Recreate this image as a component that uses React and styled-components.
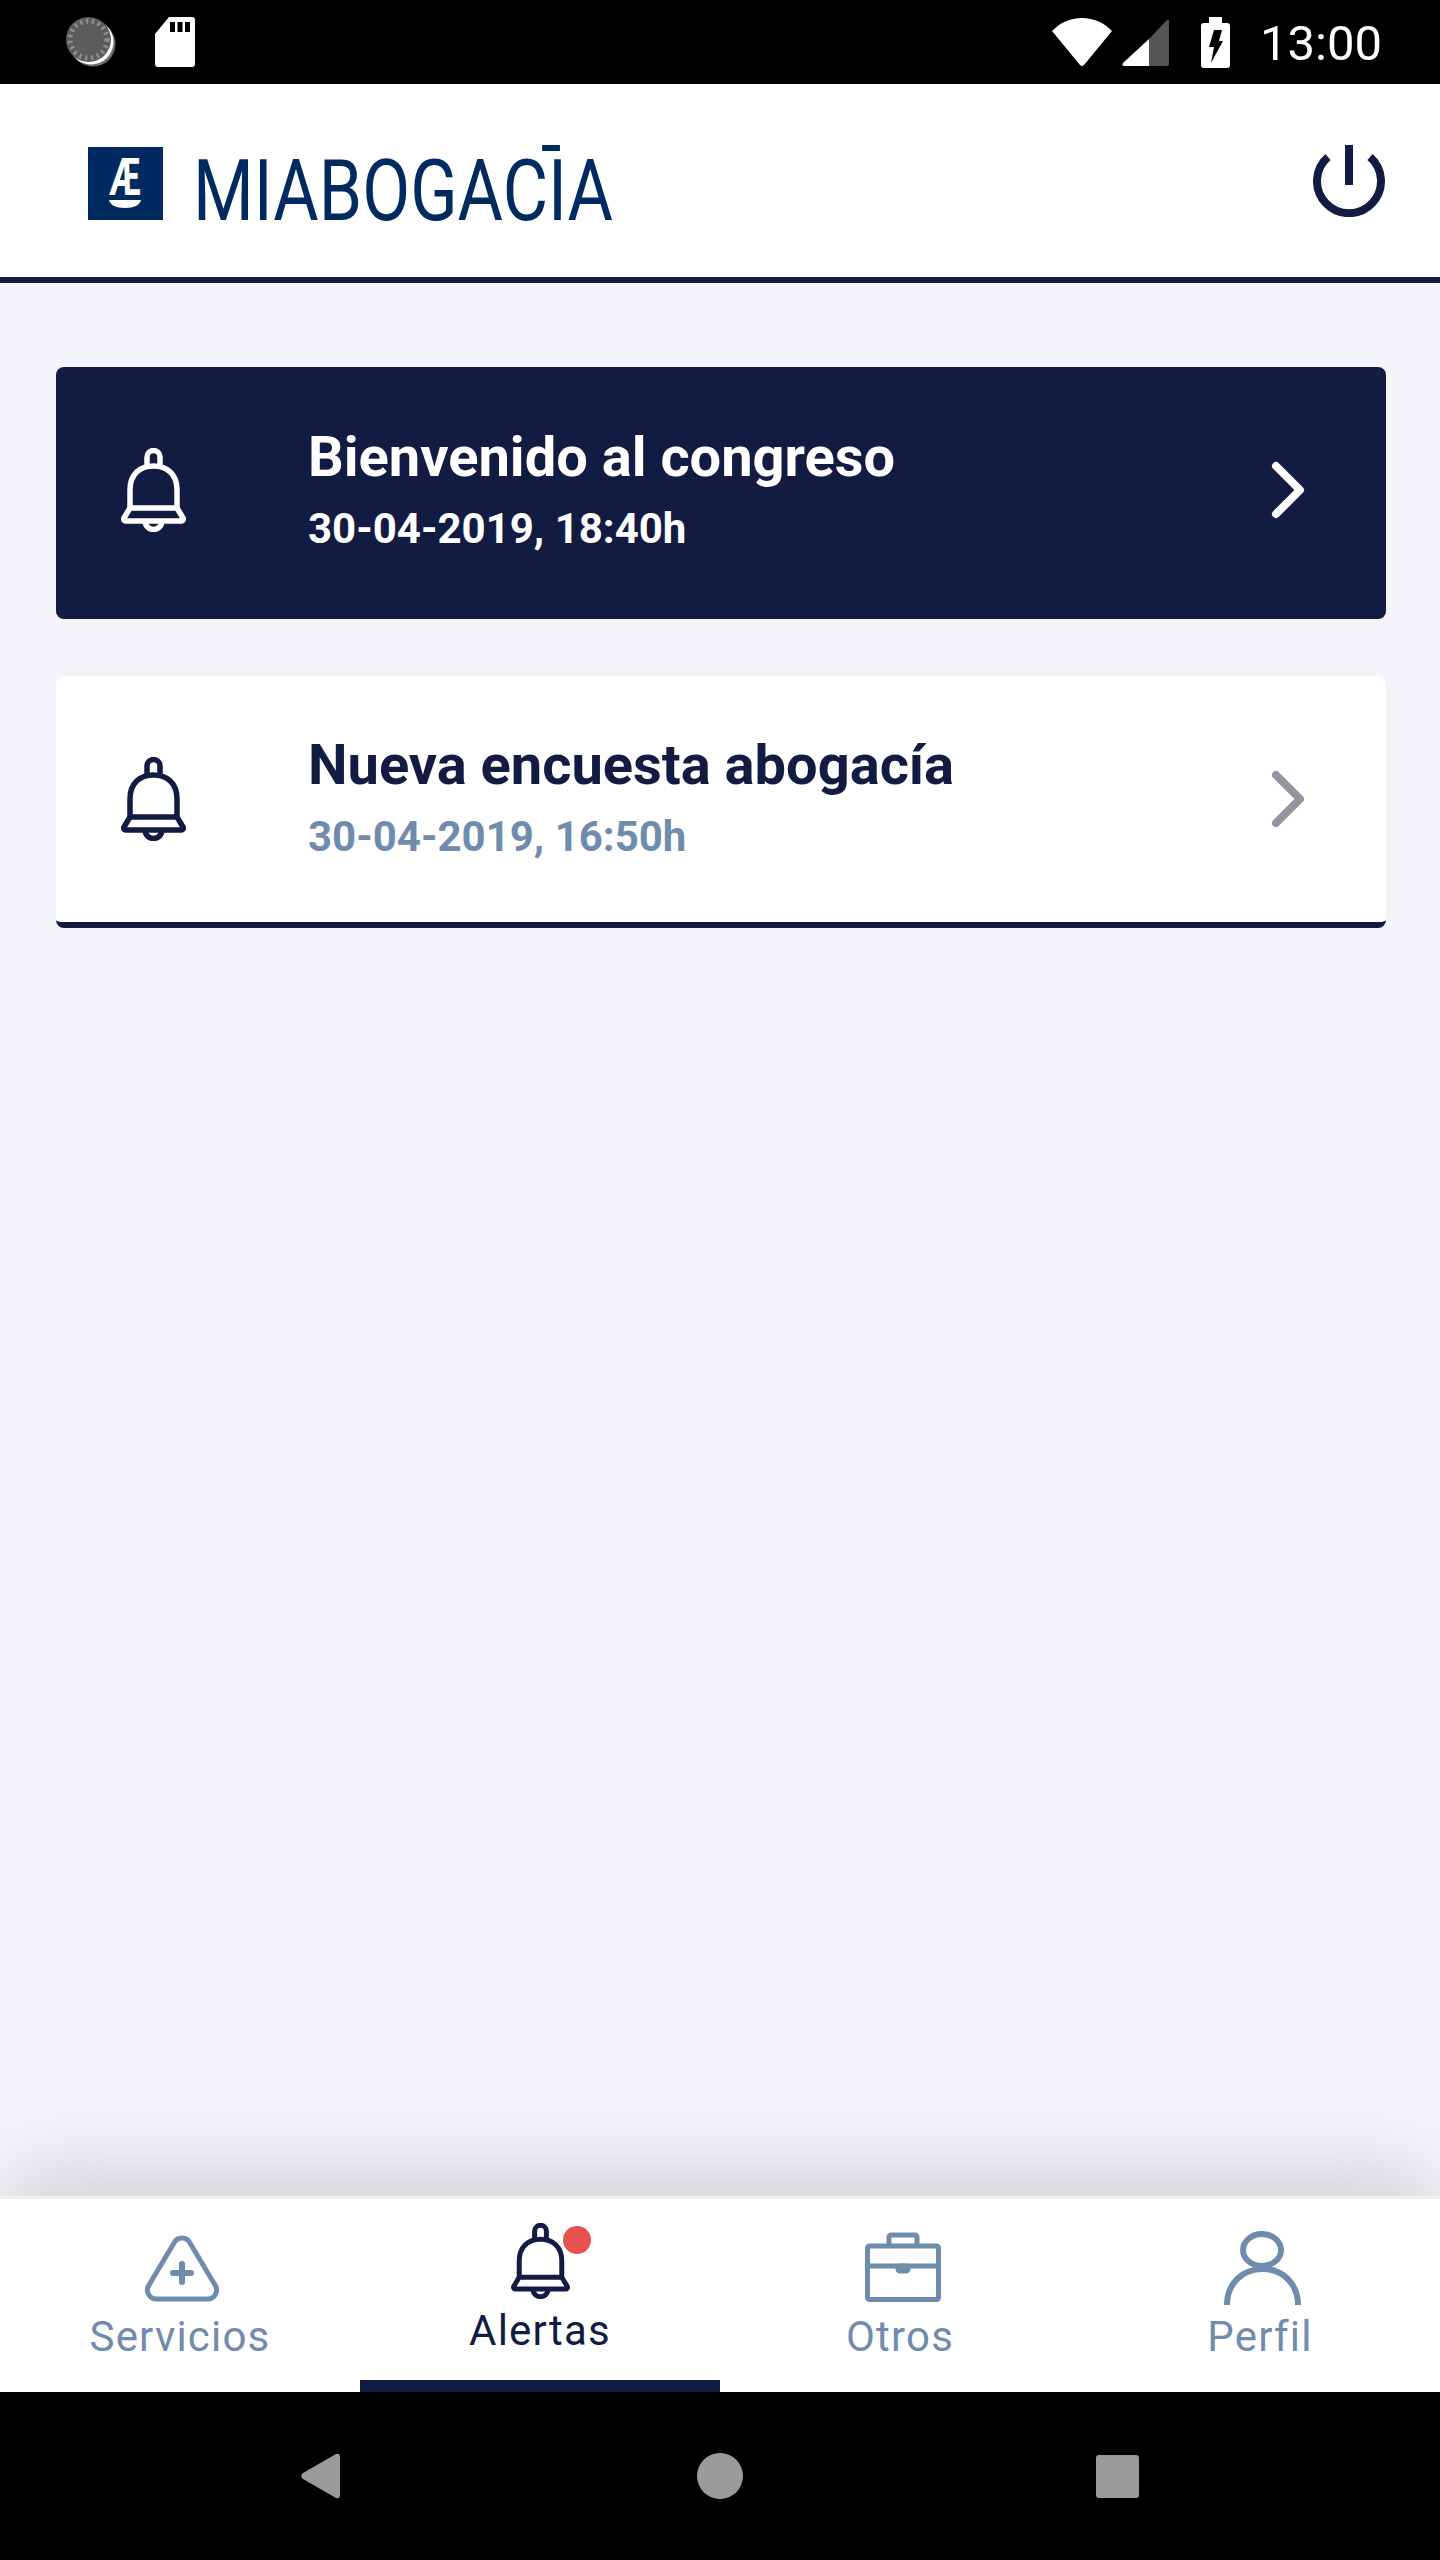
import React from 'react';
import styled, { createGlobalStyle } from 'styled-components';

const navy = '#121b42';
const steel = '#6f8cad';
const brand = '#012a60';

const GlobalStyle = createGlobalStyle`
  html, body {
    margin: 0;
    padding: 0;
    background: #000;
  }
  * {
    box-sizing: border-box;
  }
`;

const Screen = styled.div`
  width: 1440px;
  height: 2560px;
  display: flex;
  flex-direction: column;
  background: #f3f5fa;
  font-family: Roboto, 'Liberation Sans', sans-serif;
  overflow: hidden;
`;

const StatusBar = styled.div`
  height: 84px;
  flex: none;
  background: #000;
  display: flex;
  align-items: center;
  padding: 0 58px 0 66px;
`;

const StatusLeft = styled.div`
  display: flex;
  align-items: center;
  gap: 39px;
  flex: 1;
`;

const StatusRight = styled.div`
  display: flex;
  align-items: center;
`;

const Clock = styled.span`
  color: #fff;
  font-size: 49px;
  line-height: 84px;
  padding-top: 3px;
  margin-left: 30px;
`;

const Header = styled.header`
  height: 199px;
  flex: none;
  background: #fff;
  border-bottom: 6px solid ${navy};
  display: flex;
  align-items: center;
  justify-content: space-between;
  padding: 0 55px 0 88px;
`;

const LogoRow = styled.div`
  display: flex;
  align-items: flex-start;
  gap: 30px;
  margin-top: 19px;
`;

const Wordmark = styled.span`
  position: relative;
  display: block;
  margin-top: 1px;
  font-size: 86px;
  line-height: 86px;
  color: ${brand};
  white-space: nowrap;
  transform: scaleX(0.81);
  transform-origin: left center;

  &::after {
    content: '';
    position: absolute;
    top: -3px;
    left: 431px;
    width: 22px;
    height: 6px;
    background: ${brand};
  }
`;

const Main = styled.main`
  flex: 1;
  display: flex;
  flex-direction: column;
  gap: 57px;
  padding: 84px 54px 0 56px;
`;

const Card = styled.div`
  height: 252px;
  display: flex;
  align-items: center;
  padding: 0 81px 0 65px;
  border-radius: 8px;
  border-bottom: 6px solid ${navy};
  background: ${props => (props.$active ? navy : '#fff')};
  color: ${props => (props.$active ? '#fff' : navy)};
`;

const CardText = styled.div`
  flex: 1;
  margin-left: 122px;
  padding-bottom: ${props => (props.$active ? '2px' : '4px')};
  display: flex;
  flex-direction: column;
`;

const CardTitle = styled.div`
  font-size: 56px;
  font-weight: 700;
  line-height: 64px;
`;

const CardDate = styled.div`
  font-size: 42px;
  font-weight: 700;
  line-height: 48px;
  margin-top: 16px;
  color: ${props => (props.$active ? '#fff' : steel)};
`;

const TabBar = styled.nav`
  height: 196px;
  flex: none;
  display: grid;
  grid-template-columns: repeat(4, 1fr);
  background: #fff;
  box-shadow: 0 -34px 80px -10px rgba(0, 0, 0, 0.15);
  border-top: 3px solid #eeeff1;
  position: relative;
`;

const Tab = styled.div`
  display: flex;
  flex-direction: column;
  align-items: center;
  justify-content: flex-end;
  padding-bottom: ${props => (props.$active ? '24px' : '30px')};
  border-bottom: ${props => (props.$active ? `12px solid ${navy}` : 'none')};
  color: ${props => (props.$active ? navy : steel)};
`;

const TabIcon = styled.div`
  position: relative;
  height: 76px;
  display: flex;
  align-items: flex-end;
  justify-content: center;
  margin-left: ${props => props.$nudge || 0}px;
  margin-bottom: ${props => -(props.$drop || 0)}px;
`;

const TabLabel = styled.div`
  font-size: 42px;
  line-height: 50px;
  letter-spacing: 1.2px;
  margin-top: ${props => (props.$active ? '7px' : '10px')};
`;

const Badge = styled.span`
  position: absolute;
  top: 3px;
  left: 52px;
  width: 28px;
  height: 28px;
  border-radius: 50%;
  background: #e8524e;
`;

const NavBar = styled.div`
  height: 168px;
  flex: none;
  background: #000;
  display: grid;
  grid-template-columns: repeat(3, 1fr);
  padding: 0 120px;
  align-items: center;
  justify-items: center;
`;

const NavDot = styled.div`
  width: 46px;
  height: 46px;
  border-radius: 50%;
  background: #9b9b9b;
`;

const NavSquare = styled.div`
  width: 43px;
  height: 43px;
  margin-right: 5px;
  border-radius: 3px;
  background: #9b9b9b;
`;

const DialIcon = () => (
  <svg width="50" height="50" viewBox="0 0 50 50">
    <circle cx="27" cy="27" r="22.500" fill="#6e6e6e" />
    <circle cx="25" cy="25" r="22.500" fill="#fff" />
    <circle cx="22.500" cy="22.500" r="22.500" fill="#5c5c5c" />
    <circle cx="22.500" cy="22.500" r="18.500" fill="none" stroke="#8c8c8c" strokeWidth="5" strokeDasharray="2.400 3.600" />
  </svg>
);

const SdIcon = () => (
  <svg width="40" height="50" viewBox="0 0 40 50">
    <path d="M14 0H37a3 3 0 0 1 3 3V47a3 3 0 0 1-3 3H3a3 3 0 0 1-3-3V17Z" fill="#fff" />
    <path d="M15 5h5v10h-5ZM22.500 5h5v10h-5ZM30 5h5v10h-5Z" fill="#000" />
  </svg>
);

const WifiIcon = () => (
  <svg width="60" height="48" viewBox="0 0 60 48">
    <path d="M0 13C8 5 18 0 30 0C42 0 52 5 60 13L32 47a3 3 0 0 1-4 0Z" fill="#fff" />
  </svg>
);

const SignalIcon = () => (
  <svg width="47" height="47" viewBox="0 0 47 47" style={{ marginLeft: 10 }}>
    <path d="M27 20V47H2a2 2 0 0 1-1-3Z" fill="#fff" />
    <path d="M27 20L45 1a1.500 1.500 0 0 1 2 1V45a2 2 0 0 1-2 2H27Z" fill="#555" />
  </svg>
);

const BatteryIcon = () => (
  <svg width="29" height="51" viewBox="0 0 29 51" style={{ marginLeft: 32 }}>
    <path d="M8 0H21V6H26a3 3 0 0 1 3 3V48a3 3 0 0 1-3 3H3a3 3 0 0 1-3-3V9a3 3 0 0 1 3-3H8Z" fill="#fff" />
    <path d="M13 13H21L18 24H22L10 46L13 30H8Z" fill="#000" />
  </svg>
);

const PowerIcon = () => (
  <svg width="72" height="72" viewBox="0 0 72 72" fill="none" stroke={navy} strokeWidth="8">
    <path d="M15 12A32 32 0 1 0 57 12" />
    <path d="M36 0V40" />
  </svg>
);

const LogoBadge = () => (
  <svg width="75" height="73" viewBox="0 0 75 73">
    <rect width="75" height="73" fill={brand} />
    <text x="37" y="48" textAnchor="middle" fontFamily="Roboto" fontWeight="700" fontSize="52" fill="#fff" textLength="32" lengthAdjust="spacingAndGlyphs">Æ</text>
    <path d="M21 53H53C52 58 46 61 37 61C28 61 22 58 21 53Z" fill="#fff" />
  </svg>
);

const BellIcon = ({ width = 65, height = 84 }) => (
  <svg width={width} height={height} viewBox="0 0 65 84" fill="none" stroke="currentColor" strokeWidth="5.500" strokeLinejoin="round">
    <path d="M26 19V9a6.500 6.500 0 0 1 13 0V19" />
    <path d="M9 60V42C9 26 19 18 32.500 18C46 18 56 26 56 42V60" />
    <path d="M9 60H56L62 70a2 2 0 0 1-2 3H5a2 2 0 0 1-2-3Z" />
    <path d="M24 73a8.500 8.500 0 0 0 17 0" />
  </svg>
);

const Chevron = ({ color }) => (
  <svg width="34" height="58" viewBox="0 0 34 58" fill="none" stroke={color} strokeWidth="8" strokeLinecap="round" strokeLinejoin="round">
    <path d="M5 5L29 29L5 53" />
  </svg>
);

const ServiceIcon = () => (
  <svg width="76" height="67" viewBox="0 0 76 67" fill="none" stroke="currentColor" strokeWidth="5">
    <path d="M30 8a9 9 0 0 1 16 0L71 50a9 9 0 0 1-8 14H13a9 9 0 0 1-8-14Z" />
    <path d="M38 29V47M29 38H47" strokeWidth="6" strokeLinecap="round" />
  </svg>
);

const BriefcaseIcon = () => (
  <svg width="76" height="70" viewBox="0 0 76 70" fill="none" stroke="currentColor" strokeWidth="5">
    <rect x="2.500" y="14" width="71" height="53.500" rx="2" />
    <path d="M24 14V5a2 2 0 0 1 2-2H50a2 2 0 0 1 2 2V14" />
    <path d="M2.500 34H73.500" />
    <rect x="33" y="34" width="10" height="5" rx="2" fill="currentColor" />
  </svg>
);

const PersonIcon = () => (
  <svg width="77" height="74" viewBox="0 0 77 74" fill="none" stroke="currentColor" strokeWidth="6">
    <ellipse cx="38" cy="19" rx="19" ry="16" />
    <path d="M3 74C3 52 19 38 38.500 38C58 38 74 52 74 74" />
  </svg>
);

const BackTriangle = () => (
  <svg width="39" height="46" viewBox="0 0 39 46">
    <path d="M35 1a3 3 0 0 1 4 2V43a3 3 0 0 1-4 2L2 26a3.500 3.500 0 0 1 0-6Z" fill="#9b9b9b" />
  </svg>
);

const alerts = [
  { title: 'Bienvenido al congreso', date: '30-04-2019, 18:40h', active: true },
  { title: 'Nueva encuesta abogacía', date: '30-04-2019, 16:50h', active: false },
];

const App = () => (
  <Screen>
    <GlobalStyle />
    <StatusBar>
      <StatusLeft>
        <DialIcon />
        <SdIcon />
      </StatusLeft>
      <StatusRight>
        <WifiIcon />
        <SignalIcon />
        <BatteryIcon />
        <Clock>13:00</Clock>
      </StatusRight>
    </StatusBar>
    <Header>
      <LogoRow>
        <LogoBadge />
        <Wordmark>MIABOGACIA</Wordmark>
      </LogoRow>
      <PowerIcon />
    </Header>
    <Main>
      {alerts.map(alert => (
        <Card key={alert.title} $active={alert.active}>
          <BellIcon />
          <CardText $active={alert.active}>
            <CardTitle>{alert.title}</CardTitle>
            <CardDate $active={alert.active}>{alert.date}</CardDate>
          </CardText>
          <Chevron color={alert.active ? '#fff' : '#9294a0'} />
        </Card>
      ))}
    </Main>
    <TabBar>
      <Tab>
        <TabIcon $nudge={4}><ServiceIcon /></TabIcon>
        <TabLabel>Servicios</TabLabel>
      </Tab>
      <Tab $active>
        <TabIcon>
          <BellIcon width={59} height={76} />
          <Badge />
        </TabIcon>
        <TabLabel $active>Alertas</TabLabel>
      </Tab>
      <Tab>
        <TabIcon $nudge={6}><BriefcaseIcon /></TabIcon>
        <TabLabel>Otros</TabLabel>
      </Tab>
      <Tab>
        <TabIcon $nudge={5} $drop={3}><PersonIcon /></TabIcon>
        <TabLabel>Perfil</TabLabel>
      </Tab>
    </TabBar>
    <NavBar>
      <BackTriangle />
      <NavDot />
      <NavSquare />
    </NavBar>
  </Screen>
);

export default App;
